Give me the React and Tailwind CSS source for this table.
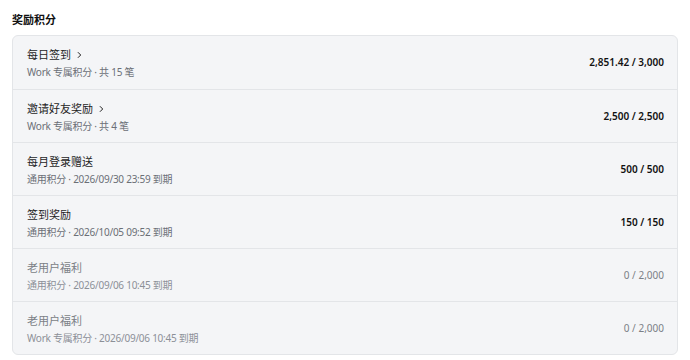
import React from 'react'

const rows = [
  { title: '每日签到', link: true, sub: 'Work 专属积分 · 共 15 笔', value: '2,851.42 / 3,000' },
  { title: '邀请好友奖励', link: true, sub: 'Work 专属积分 · 共 4 笔', value: '2,500 / 2,500' },
  { title: '每月登录赠送', sub: '通用积分 · 2026/09/30 23:59 到期', value: '500 / 500' },
  { title: '签到奖励', sub: '通用积分 · 2026/10/05 09:52 到期', value: '150 / 150' },
  { title: '老用户福利', sub: '通用积分 · 2026/09/06 10:45 到期', value: '0 / 2,000', muted: true },
  { title: '老用户福利', sub: 'Work 专属积分 · 2026/09/06 10:45 到期', value: '0 / 2,000', muted: true },
]

function Chevron() {
  return (
    <svg width="7" height="8" viewBox="0 0 7 8" className="ml-[5px]">
      <path d="M2.2 1.5 L4.7 4 L2.2 6.5" fill="none" stroke="currentColor" strokeWidth="1" strokeLinecap="round" strokeLinejoin="round" />
    </svg>
  )
}

export default function App() {
  return (
    <div className="w-[690px] h-[360px] bg-white px-3 font-['Noto_Sans','Noto_Sans_CJK_SC',sans-serif]">
      <h2 className="pt-[11px] pb-[7px] text-[11px] leading-[17px] font-semibold text-[#111]">奖励积分</h2>
      <div className="w-[666px] rounded-md border border-[#e3e5e8] bg-[#f4f5f7] overflow-hidden">
        {rows.map((r, i) => (
          <div
            key={i}
            className={`flex items-center justify-between h-[53px] pl-[14px] pr-[13px] ${i > 0 ? 'border-t border-[#e3e5e8]' : ''}`}
          >
            <div className="flex flex-col pt-[2px]">
              <div className={`flex items-center text-[11px] leading-[14px] ${r.muted ? 'text-[#7b7f86]' : 'text-[#1f1f1f]'}`}>
                {r.title}
                {r.link && <Chevron />}
              </div>
              <div className={`mt-[4px] text-[10px] leading-[13px] tracking-[-0.25px] ${r.muted ? 'text-[#8c9097]' : 'text-[#6b6f76]'}`}>
                {r.sub}
              </div>
            </div>
            <div className={`text-[10px] ${r.muted ? 'text-[#7b7f86]' : 'font-semibold text-[#111]'}`}>
              {r.value}
            </div>
          </div>
        ))}
      </div>
    </div>
  )
}
